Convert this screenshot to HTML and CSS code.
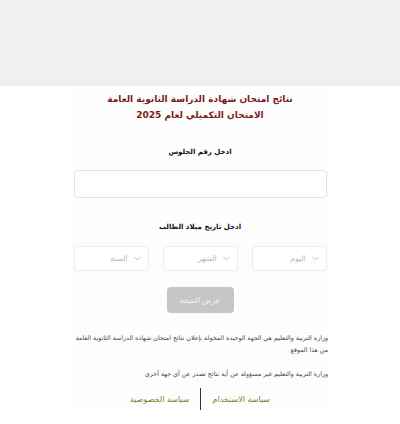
FILE: index.html
```html
<!DOCTYPE html>
<html lang="ar" dir="rtl">
<head>
  <meta charset="UTF-8" />
  <meta name="viewport" content="width=device-width, initial-scale=1.0"/>
  <title>نتائج الثانوية العامة</title>
  <link rel="stylesheet" href="styles.css">
</head>
<body>

<div class="top-bar"></div>

<div class="container">
  <!-- العنوان -->
  <h1 class="title">نتائج امتحان شهادة الدراسة الثانوية العامة<br>الامتحان التكميلي لعام 2025</h1>

  <!-- رقم الجلوس -->
  <div class="label">ادخل رقم الجلوس</div>
  <input type="text" class="seat-input">

  <!-- تاريخ الميلاد -->
  <div class="label label-date">ادخل تاريخ ميلاد الطالب</div>
  <div class="date-row">
    <div class="select"><span class="chev"><svg width="7" height="5" viewBox="0 0 7 5"><path d="M0.5 1 L3.5 4 L6.5 1" fill="none" stroke="#b5b5b5" stroke-width="0.9"/></svg></span>اليوم</div>
    <div class="select"><span class="chev"><svg width="7" height="5" viewBox="0 0 7 5"><path d="M0.5 1 L3.5 4 L6.5 1" fill="none" stroke="#b5b5b5" stroke-width="0.9"/></svg></span>الشهر</div>
    <div class="select"><span class="chev"><svg width="7" height="5" viewBox="0 0 7 5"><path d="M0.5 1 L3.5 4 L6.5 1" fill="none" stroke="#b5b5b5" stroke-width="0.9"/></svg></span>السنة</div>
  </div>

  <div class="btn-wrap">
    <button class="show-btn">عرض النتيجة</button>
  </div>

  <!-- ملاحظات -->
  <p class="note">وزارة التربية والتعليم هي الجهة الوحيدة المخولة بإعلان نتائج امتحان شهادة الدراسة الثانوية العامة من هذا الموقع</p>
  <p class="note">وزارة التربية والتعليم غير مسؤولة عن أية نتائج تصدر عن أي جهة أخرى</p>

  <div class="footer-links">
    <a href="#">سياسة الاستخدام</a>
    <span class="sep"></span>
    <a href="#">سياسة الخصوصية</a>
  </div>
</div>

</body>
</html>
```

FILE: styles.css
```css
* {
  margin: 0;
  padding: 0;
  box-sizing: border-box;
  font-family: "DejaVu Sans", "Liberation Sans", sans-serif;
}
body {
  background: #fff;
  color: #222;
}

/* الشريط العلوي */
.top-bar {
  height: 86px;
  background: #f0f0f0;
}

.container {
  width: 256px;
  margin: 5px auto 0;
  background: #fdfdfd;
}

.title {
  text-align: center;
  color: #7a1c22;
  font-size: 9px;
  line-height: 16px;
  font-weight: bold;
}

.label {
  text-align: center;
  font-size: 7px;
  font-weight: bold;
  color: #111;
  margin-top: 23px;
  line-height: 12px;
}
.label-date {
  margin-top: 23px;
}

.seat-input {
  display: block;
  width: 253px;
  height: 28px;
  margin: 12px auto 0;
  border: 1px solid #e2e2e2;
  border-radius: 4px;
  background: #fff;
  outline: none;
}

.date-row {
  display: flex;
  justify-content: space-between;
  width: 253px;
  margin: 13px auto 0;
}
.select {
  width: 75px;
  height: 25px;
  border: 1px solid #ececec;
  border-radius: 3px;
  background: #fff;
  display: flex;
  align-items: center;
  padding-right: 7px;
  font-size: 7.5px;
  color: #b8b8b8;
}
.chev {
  display: flex;
  margin-left: 6px;
}

.btn-wrap {
  text-align: center;
  margin-top: 16px;
}
.show-btn {
  width: 67px;
  height: 26px;
  border: none;
  border-radius: 4px;
  background: #c6c6c6;
  color: #f4f4f4;
  font-size: 7.5px;
}

.note {
  font-size: 6.3px;
  line-height: 12px;
  color: #444;
  text-align: right;
  margin-top: 19px;
}
.note + .note {
  margin-top: 12px;
}

.footer-links {
  display: flex;
  justify-content: center;
  align-items: center;
  margin-top: 8px;
  gap: 11px;
}
.footer-links a {
  color: #7f7f22;
  text-decoration: none;
  font-size: 8px;
}
.sep {
  width: 1px;
  height: 22px;
  background: #333;
}
```
